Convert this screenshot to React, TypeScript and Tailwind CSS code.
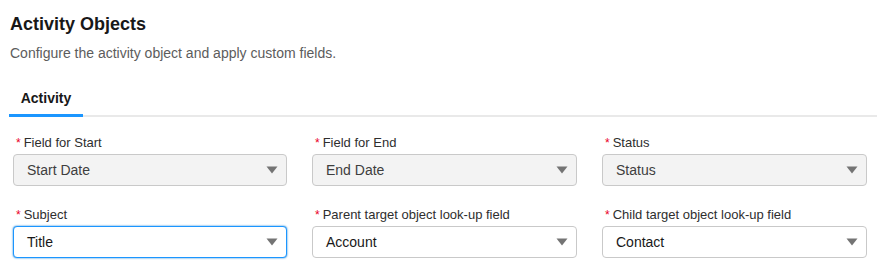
import React from "react";

type F = { label: string; value: string; disabled?: boolean; focused?: boolean };

const rows: F[][] = [
  [
    { label: "Field for Start", value: "Start Date", disabled: true },
    { label: "Field for End", value: "End Date", disabled: true },
    { label: "Status", value: "Status", disabled: true },
  ],
  [
    { label: "Subject", value: "Title", focused: true },
    { label: "Parent target object look-up field", value: "Account" },
    { label: "Child target object look-up field", value: "Contact" },
  ],
];

function Field({ f }: { f: F }) {
  const box = f.disabled
    ? "bg-[#f3f3f3] border-[#c9c9c9] text-[#3e3e3e]"
    : f.focused
    ? "bg-white border-[#1b96ff] shadow-[0_0_2px_#0176d3] text-[#181818]"
    : "bg-white border-[#c9c9c9] text-[#181818]";
  return (
    <div className="flex flex-col">
      <div className="flex items-center h-[20px] pl-[3px] text-[13px] text-[#2e2e2e]">
        <span className="text-[#ea001e] mr-[3px] text-[12px] leading-none">*</span>
        <span>{f.label}</span>
      </div>
      <div
        className={`mt-[1px] h-[32px] border rounded-[4px] flex items-center justify-between pl-[13px] pr-[8px] text-[14px] ${box}`}
      >
        <span>{f.value}</span>
        <svg width="12" height="8" viewBox="0 0 12 8">
          <path d="M0.5 0.5 L11.5 0.5 L6 7.5 Z" fill="#747474" />
        </svg>
      </div>
    </div>
  );
}

export default function App() {
  return (
    <div
      className="w-[877px] h-[272px] bg-white"
      style={{ fontFamily: "'Liberation Sans', Arial, sans-serif" }}
    >
      <div className="pl-[10px] pt-[12px]">
        <h1 className="text-[18px] leading-[24px] font-bold text-[#181818]">Activity Objects</h1>
        <p className="mt-[7px] text-[14px] leading-[20px] text-[#5c5c5c]">
          Configure the activity object and apply custom fields.
        </p>
      </div>
      <div className="mt-[25px] ml-[9px] flex items-end border-b-2 border-[#e9e9e9]">
        <div className="w-[74px] -mb-[2px] border-b-[3px] border-[#1b96ff] h-[29px] flex justify-center">
          <span className="text-[14px] font-bold text-[#181818] leading-[20px]">Activity</span>
        </div>
      </div>
      <div className="ml-[13px] mt-[16px] grid grid-cols-[274px_265px_265px] gap-x-[25px] gap-y-[19px]">
        {rows.flat().map((f) => (
          <Field key={f.label} f={f} />
        ))}
      </div>
    </div>
  );
}
